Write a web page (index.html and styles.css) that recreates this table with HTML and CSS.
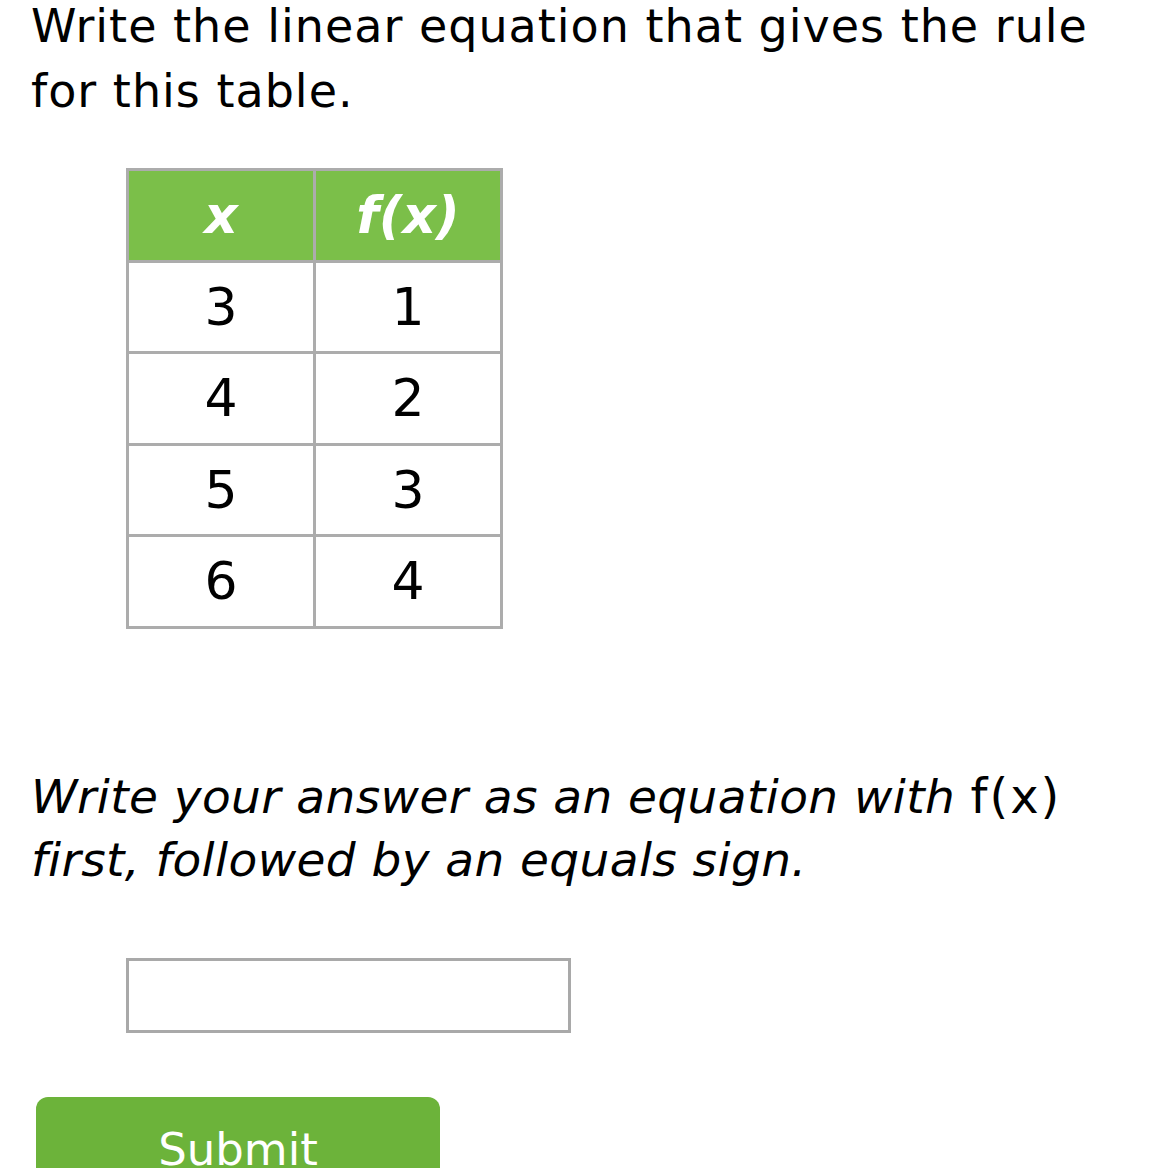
FILE: index.html
```html
<!DOCTYPE html>
<html>
<head>
<meta charset="utf-8">
<link rel="stylesheet" href="styles.css">
</head>
<body>
<div class="page">
  <p class="question">Write the linear equation that gives the rule for this table.</p>
  <table class="rule-table">
    <thead>
      <tr><th><i>x</i></th><th><i>f</i>(<i>x</i>)</th></tr>
    </thead>
    <tbody>
      <tr><td>3</td><td>1</td></tr>
      <tr><td>4</td><td>2</td></tr>
      <tr><td>5</td><td>3</td></tr>
      <tr><td>6</td><td>4</td></tr>
    </tbody>
  </table>
  <p class="instructions"><em>Write your answer as an equation with </em><span class="fx">f(x)</span> <em>first, followed by an equals sign.</em></p>
  <div class="answer-box"></div>
  <button class="submit">Submit</button>
</div>
</body>
</html>
```
FILE: styles.css
```css
html, body {
  margin: 0;
  padding: 0;
  background: #fff;
}
body {
  font-family: "DejaVu Sans", Verdana, sans-serif;
  color: #000;
  overflow: hidden;
  height: 1168px;
}
.page {
  padding: 0 0 0 31px;
}
.question {
  margin: -6px 0 0 0;
  font-size: 46px;
  letter-spacing: 1px;
  line-height: 65px;
  width: 1100px;
}
.rule-table {
  margin: 44px 0 0 95px;
  border-collapse: collapse;
  border: 3px solid #acacac;
}
.rule-table th,
.rule-table td {
  border: 3px solid #acacac;
  width: 184px;
  height: 88.5px;
  padding: 0;
  text-align: center;
  font-size: 52px;
  font-weight: normal;
}
.rule-table th {
  background: #7bbf49;
  color: #fff;
  font-weight: bold;
  font-style: italic;
}
.instructions {
  margin: 136px 0 0 0;
  font-size: 47px;
  letter-spacing: 0.4px;
  line-height: 63px;
  width: 1080px;
}
.instructions em {
  font-style: italic;
}
.fx {
  font-size: 48px;
  letter-spacing: 2px;
}
.answer-box {
  margin: 67px 0 0 95px;
  width: 439px;
  height: 69px;
  border: 3px solid #a9a9a9;
}
.submit {
  display: block;
  margin: 64px 0 0 5px;
  width: 404px;
  border: none;
  border-radius: 12px;
  background: #6cb33a;
  color: #fff;
  font-family: "DejaVu Sans", Verdana, sans-serif;
  font-size: 45px;
  line-height: 52px;
  padding: 27px 0 30px 0;
  text-align: center;
}
```
